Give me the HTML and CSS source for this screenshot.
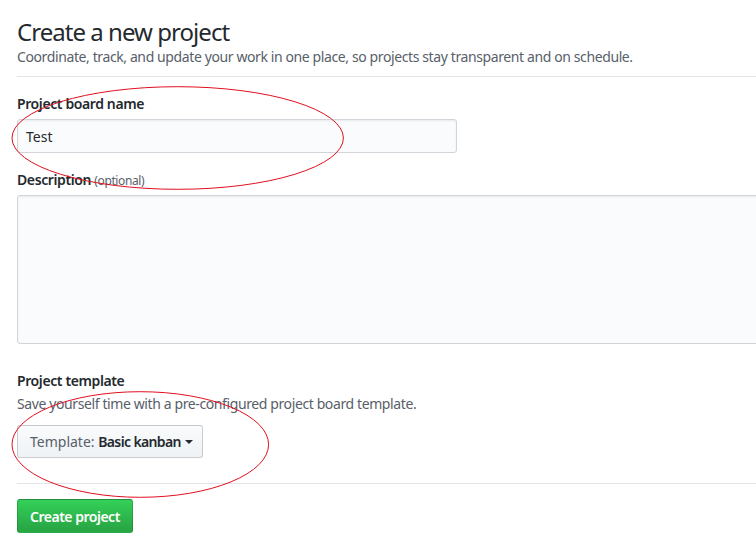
FILE: index.html
```html
<!DOCTYPE html>
<html>
<head>
<meta charset="utf-8">
<link rel="stylesheet" href="styles.css">
</head>
<body>
<div class="page">
  <div class="head">
    <h1 class="title">Create a new project</h1>
    <p class="lead">Coordinate, track, and update your work in one place, so projects stay transparent and on schedule.</p>
  </div>
  <form class="form">
    <div class="field">
      <label class="label">Project board name</label>
      <input class="input" type="text" value="Test">
    </div>
    <div class="field">
      <label class="label">Description <span class="opt">(optional)</span></label>
      <textarea class="textarea"></textarea>
    </div>
    <div class="field tpl">
      <label class="label">Project template</label>
      <p class="note">Save yourself time with a pre-configured project board template.</p>
      <button type="button" class="btn">Template:&nbsp;<b>Basic kanban</b><span class="caret"></span></button>
    </div>
    <div class="actions">
      <button type="button" class="btn-primary">Create project</button>
    </div>
  </form>
</div>
<svg class="marks" width="756" height="558" viewBox="0 0 756 558">
  <ellipse cx="177.7" cy="138" rx="165.7" ry="51.3" fill="none" stroke="#e0101e" stroke-width="1"/>
  <ellipse cx="140.3" cy="444.5" rx="128.3" ry="52.8" fill="none" stroke="#e0101e" stroke-width="1"/>
</svg>
</body>
</html>
```
FILE: styles.css
```css
html, body {
  margin: 0;
  padding: 0;
  background: #fff;
  overflow: hidden;
}
body {
  font-family: "Noto Sans", "Open Sans", sans-serif;
  font-size: 14px;
  letter-spacing: -0.028em;
  color: #24292e;
  width: 756px;
  height: 558px;
  position: relative;
}
.page {
  padding-left: 17px;
  width: 739px;
  overflow: hidden;
}
.head {
  padding-top: 17px;
  padding-bottom: 9px;
  border-bottom: 1px solid #e1e4e8;
}
.title {
  margin: 0;
  font-size: 24px;
  font-weight: 400;
  line-height: 30px;
  letter-spacing: -0.04em;
}
.lead {
  margin: 0;
  color: #586069;
  font-size: 14px;
  line-height: 20px;
}
.form {
  padding-top: 17px;
}
.field {
  margin-bottom: 17px;
}
.label {
  display: block;
  font-weight: 600;
  line-height: 20px;
  margin-bottom: 5px;
}
.opt {
  font-size: 12px;
  font-weight: 400;
  color: #586069;
}
.input {
  display: block;
  box-sizing: border-box;
  width: 440px;
  height: 34px;
  padding: 6px 8px;
  font: inherit;
  font-size: 14px;
  color: #24292e;
  background: #fafbfc;
  border: 1px solid #d1d5da;
  border-radius: 3px;
  box-shadow: inset 0 1px 2px rgba(27,31,35,.075);
}
.textarea {
  display: block;
  box-sizing: border-box;
  width: 790px;
  height: 149px;
  margin-top: -1px;
  background: #fafbfc;
  border: 1px solid #d1d5da;
  border-radius: 3px;
  box-shadow: inset 0 1px 2px rgba(27,31,35,.075);
  resize: none;
}
.tpl {
  padding-top: 10px;
}
.note {
  margin: -2px 0 11px;
  color: #586069;
  line-height: 20px;
}
.btn {
  display: inline-flex;
  align-items: center;
  box-sizing: border-box;
  height: 33px;
  padding: 0 9px 0 12px;
  font: inherit;
  font-size: 14px;
  color: #586069;
  background: linear-gradient(#fafbfc, #eff3f6 90%);
  border: 1px solid rgba(27,31,35,.2);
  border-radius: 3px;
}
.btn b {
  color: #24292e;
  font-weight: 600;
  letter-spacing: -0.045em;
}
.caret {
  display: inline-block;
  width: 0;
  height: 0;
  margin-left: 4px;
  border-top: 4px solid #24292e;
  border-left: 4px solid transparent;
  border-right: 4px solid transparent;
}
.actions {
  border-top: 1px solid #e1e4e8;
  padding-top: 15px;
  margin-top: 25px;
}
.btn-primary {
  box-sizing: border-box;
  height: 34px;
  padding: 0 12px;
  font: inherit;
  font-size: 14px;
  font-weight: 600;
  letter-spacing: -0.035em;
  color: #fff;
  background: linear-gradient(#34d058, #28a745 90%);
  border: 1px solid rgba(27,31,35,.2);
  border-radius: 3px;
}
.marks {
  position: absolute;
  left: 0;
  top: 0;
  pointer-events: none;
}
```
